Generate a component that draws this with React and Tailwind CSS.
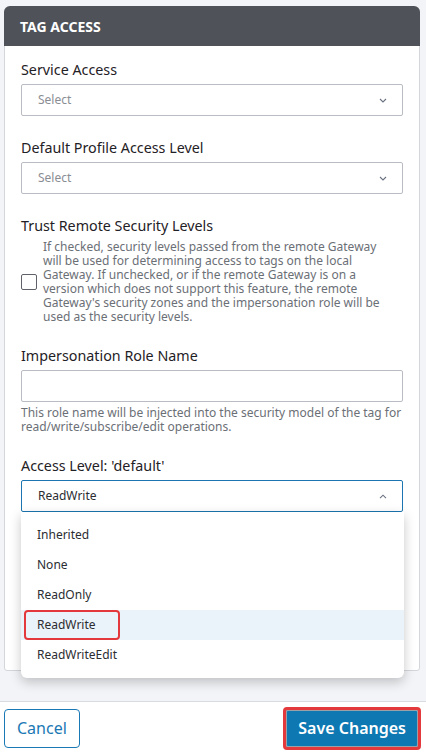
import React from 'react';

const font = { fontFamily: '"Noto Sans", "Open Sans", sans-serif' };

function Chevron({ up }) {
    return (
        <svg width="8" height="5" viewBox="0 0 8 5" className="text-gray-500">
            <path d={up ? 'M1 4.2 L4 1.2 L7 4.2' : 'M1 1 L4 4 L7 1'} fill="none" stroke="currentColor" strokeWidth="1.1" />
        </svg>
    );
}

function SelectBox({ value, open }) {
    return (
        <div
            className={`h-[32px] flex items-center justify-between pl-4 pr-[15px] rounded-[2px] bg-white border ${
                open ? 'border-[#1c75b0]' : 'border-[#b9bdc3]'
            }`}
        >
            <span className={`text-[12px] ${value ? 'text-[#2b2d31]' : 'text-[#8a8e94]'}`}>{value || 'Select'}</span>
            <Chevron up={open} />
        </div>
    );
}

function Label({ children }) {
    return <div className="text-[14.3px] leading-[20px] text-[#1f2126] mb-1">{children}</div>;
}

export default function App() {
    const options = ['Inherited', 'None', 'ReadOnly', 'ReadWrite', 'ReadWriteEdit'];

    return (
        <div className="w-[426px] h-[754px] bg-[#f3f4f7] flex flex-col overflow-hidden" style={font}>
            <div className="pt-[6px] pl-[4px] pr-[6px]">
                <div className="bg-white border border-[#d3d6db] rounded-t-[6px] rounded-b-[3px]">
                    {/* header */}
                    <div className="h-[40px] bg-[#4f5359] rounded-t-[6px] -mx-px -mt-px flex items-center px-4">
                        <span className="text-white font-bold text-[14px]">TAG ACCESS</span>
                    </div>

                    <div className="px-4 pt-[14px] pb-[158px]">
                        <div className="mb-[22px]">
                            <Label>Service Access</Label>
                            <SelectBox />
                        </div>

                        <div className="mb-[22px]">
                            <Label>Default Profile Access Level</Label>
                            <SelectBox />
                        </div>

                        <div className="mb-[22px]">
                            <Label>Trust Remote Security Levels</Label>
                            <div className="flex items-center gap-[6px]">
                                <div className="w-[16px] h-[16px] border border-[#5f6369] rounded-[2px] bg-white shrink-0" />
                                <p className="w-[348px] text-[12px] leading-[14px] text-[#6b6f76]">
                                    If checked, security levels passed from the remote Gateway will be used for determining
                                    access to tags on the local Gateway. If unchecked, or if the remote Gateway is on a
                                    version which does not support this feature, the remote Gateway's security zones and
                                    the impersonation role will be used as the security levels.
                                </p>
                            </div>
                        </div>

                        <div className="mb-[22px]">
                            <Label>Impersonation Role Name</Label>
                            <div className="h-[32px] border border-[#b9bdc3] rounded-[2px] bg-white" />
                            <p className="mt-1 text-[12px] leading-[14px] text-[#6b6f76]">
                                This role name will be injected into the security model of the tag for
                                read/write/subscribe/edit operations.
                            </p>
                        </div>

                        <div className="relative">
                            <Label>Access Level: 'default'</Label>
                            <SelectBox value="ReadWrite" open />
                            <div className="absolute left-0 right-[-1px] top-full bg-white rounded-b-[6px] shadow-[0_4px_12px_rgba(0,0,0,0.22)] py-2 z-10">
                                {options.map((o) => (
                                    <div
                                        key={o}
                                        className={`h-[30px] flex items-center px-[3px] ${o === 'ReadWrite' ? 'bg-[#ebf3fa]' : ''}`}
                                    >
                                        <span
                                            className={`h-[30px] flex items-center pl-[13px] text-[12px] text-[#2b2d31] ${
                                                o === 'ReadWrite'
                                                    ? 'w-[96px] border-2 border-[#e3383c] rounded-[4px]'
                                                    : ''
                                            }`}
                                        >
                                            <span className={o === 'ReadWrite' ? '-ml-[2px]' : ''}>{o}</span>
                                        </span>
                                    </div>
                                ))}
                            </div>
                        </div>
                    </div>
                </div>
            </div>

            {/* footer */}
            <div className="mt-auto h-[53px] bg-white border-t border-[#d8dbe0] flex items-center justify-between pl-[4px] pr-[5px]">
                <button className="h-[39px] px-[12px] border border-[#1a78b4] rounded-[4px] text-[#1a78b4] text-[16px] bg-white">
                    Cancel
                </button>
                <div className="p-px border-[3px] border-[#e3383c] rounded-[4px] bg-[#9aa0a6]">
                    <button className="h-[35px] px-[11px] bg-[#0e78b3] text-white text-[16px] font-semibold rounded-[1px]">
                        Save Changes
                    </button>
                </div>
            </div>
        </div>
    );
}
